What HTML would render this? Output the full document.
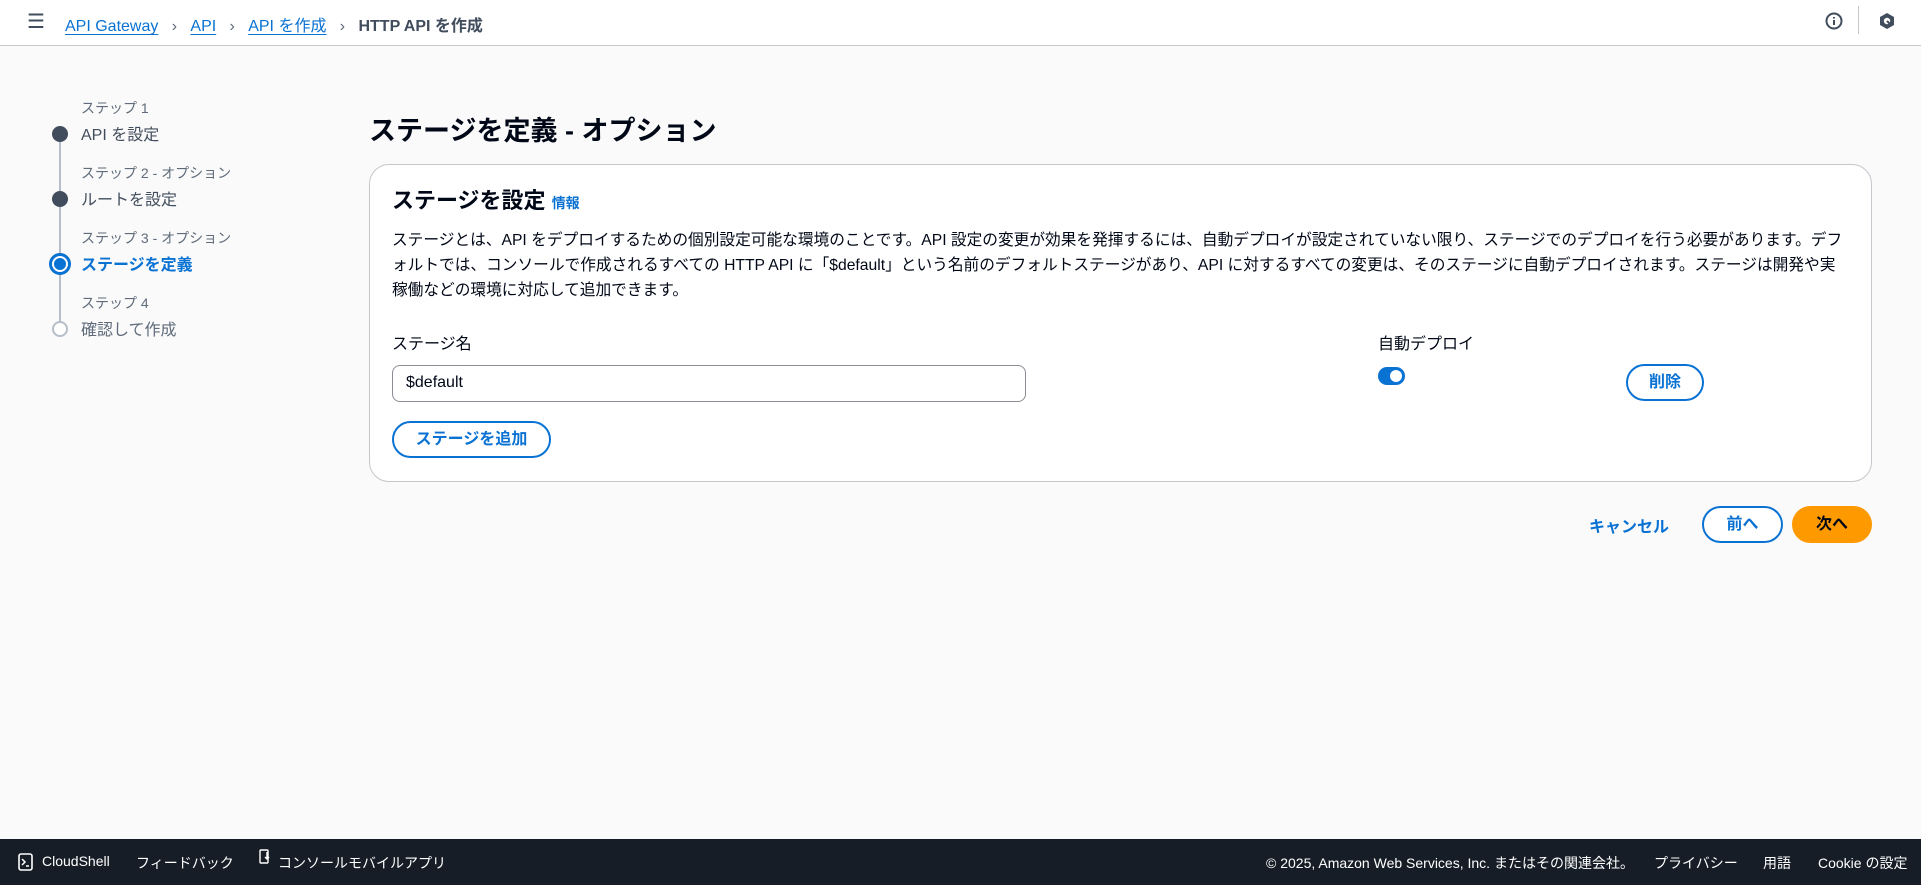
<!DOCTYPE html>
<html><head><meta charset="utf-8">
<style>
*{box-sizing:border-box;margin:0;padding:0}
body{width:1921px;height:885px;background:#fafafa;font-family:"Liberation Sans","Noto Sans CJK JP",sans-serif;color:#000716;position:relative;overflow:hidden;font-size:16px}
.hdr{position:absolute;left:0;top:0;width:1921px;height:46px;background:#fff;border-bottom:1px solid #c6c6cd}
.abs{position:absolute;white-space:nowrap}
.bc a{color:#0972d3;text-decoration:underline;text-underline-offset:3px}
.blue{color:#0972d3}
.gray{color:#5f6b7a}
.btn{position:absolute;height:37px;border:2px solid #0972d3;border-radius:20px;color:#0972d3;font-weight:bold;font-size:16px;line-height:20px;padding-top:7px;text-align:center;background:#fff}
.ftr{position:absolute;left:0;top:839px;width:1921px;height:46px;background:#161d26;color:#fff;font-size:14px}
.ftr .abs{top:14px}
</style></head><body>
<div class="hdr">
 <div class="abs" style="left:27px;top:13px;font-size:20px;line-height:18px;color:#414d5c">☰</div>
 <div class="abs bc" style="left:65px;top:12px;font-size:16px;color:#414d5c">
  <a>API Gateway</a>&nbsp;&nbsp;&nbsp;<span style="color:#5f6b7a">›</span>&nbsp;&nbsp;&nbsp;<a>API</a>&nbsp;&nbsp;&nbsp;<span style="color:#5f6b7a">›</span>&nbsp;&nbsp;&nbsp;<a>API を作成</a>&nbsp;&nbsp;&nbsp;<span style="color:#5f6b7a">›</span>&nbsp;&nbsp;&nbsp;<b>HTTP API を作成</b></div>
 <svg class="abs" style="left:1824px;top:11px" width="20" height="20" viewBox="0 0 20 20"><circle cx="10" cy="10" r="7.5" fill="none" stroke="#414d5c" stroke-width="2"/><path d="M10 9v5M10 6v1.5" stroke="#414d5c" stroke-width="2"/></svg>
 <div class="abs" style="left:1858px;top:6px;width:1px;height:28px;background:#c6c6cd"></div>
 <svg class="abs" style="left:1877px;top:11px" width="20" height="20" viewBox="0 0 20 20"><path d="M10 2l7 4v8l-7 4-7-4V6z" fill="#414d5c"/><circle cx="10" cy="10" r="3.2" fill="#fff"/><path d="M10 10l4 4" stroke="#414d5c" stroke-width="2"/></svg>
</div>

<div class="abs" style="left:59px;top:130px;width:2px;height:205px;background:#b6bec9"></div>
<div class="abs gray" style="left:81px;top:98px;font-size:14px">ステップ 1</div>
<div class="abs" style="left:81px;top:121px;font-size:16px;color:#414d5c">API を設定</div>
<div class="abs" style="left:52px;top:126px;width:16px;height:16px;border-radius:50%;background:#414d5c"></div>
<div class="abs gray" style="left:81px;top:163px;font-size:14px">ステップ 2 - オプション</div>
<div class="abs" style="left:81px;top:186px;font-size:16px;color:#414d5c">ルートを設定</div>
<div class="abs" style="left:52px;top:191px;width:16px;height:16px;border-radius:50%;background:#414d5c"></div>
<div class="abs gray" style="left:81px;top:228px;font-size:14px">ステップ 3 - オプション</div>
<div class="abs blue" style="left:81px;top:251px;font-size:16px;font-weight:bold">ステージを定義</div>
<div class="abs" style="left:49px;top:253px;width:22px;height:22px;border-radius:50%;border:3px solid #0972d3;background:#fff"></div>
<div class="abs" style="left:54px;top:258px;width:12px;height:12px;border-radius:50%;background:#0972d3"></div>
<div class="abs gray" style="left:81px;top:293px;font-size:14px">ステップ 4</div>
<div class="abs" style="left:81px;top:316px;font-size:16px;color:#5f6b7a">確認して作成</div>
<div class="abs" style="left:52px;top:321px;width:16px;height:16px;border-radius:50%;border:2px solid #b6bec9;background:#fff"></div>

<div class="abs" style="left:369px;top:109px;font-size:27px;font-weight:bold">ステージを定義 - オプション</div>

<div class="abs" style="left:369px;top:164px;width:1503px;height:318px;background:#fff;border:1px solid #c6c6cd;border-radius:20px"></div>
<div class="abs" style="left:392px;top:183px;font-size:22px;font-weight:bold">ステージを設定 <span class="blue" style="font-size:14px">情報</span></div>
<div class="abs" style="left:392px;top:228px;font-size:15.7px;line-height:25px;color:#000716">ステージとは、API をデプロイするための個別設定可能な環境のことです。API 設定の変更が効果を発揮するには、自動デプロイが設定されていない限り、ステージでのデプロイを行う必要があります。デフ<br>ォルトでは、コンソールで作成されるすべての HTTP API に「$default」という名前のデフォルトステージがあり、API に対するすべての変更は、そのステージに自動デプロイされます。ステージは開発や実<br>稼働などの環境に対応して追加できます。</div>
<div class="abs" style="left:392px;top:330px;font-size:16px">ステージ名</div>
<div class="abs" style="left:392px;top:365px;width:634px;height:37px;border:1px solid #8c8c94;border-radius:8px;padding:8px 13px;font-size:16px;background:#fff">$default</div>
<div class="btn" style="left:392px;top:421px;width:159px">ステージを追加</div>
<div class="abs" style="left:1378px;top:330px;font-size:16px">自動デプロイ</div>
<div class="abs" style="left:1378px;top:367px;width:27px;height:18px;border-radius:9px;background:#0972d3"></div>
<div class="abs" style="left:1390px;top:370px;width:12px;height:12px;border-radius:50%;background:#fff"></div>
<div class="btn" style="left:1626px;top:364px;width:78px">削除</div>

<div class="abs blue" style="left:1589px;top:513px;font-size:16px;font-weight:bold">キャンセル</div>
<div class="btn" style="left:1702px;top:506px;width:81px">前へ</div>
<div class="btn" style="left:1792px;top:506px;width:80px;background:#ff9900;border-color:#ff9900;color:#000716">次へ</div>

<div class="ftr">
 <svg class="abs" style="left:18px;top:14px" width="15" height="18" viewBox="0 0 15 18"><rect x="1" y="1" width="13" height="16" rx="2" fill="none" stroke="#fff" stroke-width="1.6"/><path d="M4 6l3 3-3 3M8 13h3" stroke="#fff" stroke-width="1.5" fill="none"/></svg>
 <div class="abs" style="left:42px">CloudShell</div>
 <div class="abs" style="left:136px">フィードバック</div>
 <svg class="abs" style="left:259px;top:10px" width="12" height="18" viewBox="0 0 12 18"><rect x="1" y="1" width="8" height="13" rx="1" fill="none" stroke="#fff" stroke-width="1.4"/><path d="M8 3v7M6 8l2 2 2-2" stroke="#fff" stroke-width="1.4" fill="none"/></svg>
 <div class="abs" style="left:278px">コンソールモバイルアプリ</div>
 <div class="abs" style="left:1266px">© 2025, Amazon Web Services, Inc. またはその関連会社。</div>
 <div class="abs" style="left:1654px">プライバシー</div>
 <div class="abs" style="left:1763px">用語</div>
 <div class="abs" style="left:1818px">Cookie の設定</div>
</div>
</body></html>
